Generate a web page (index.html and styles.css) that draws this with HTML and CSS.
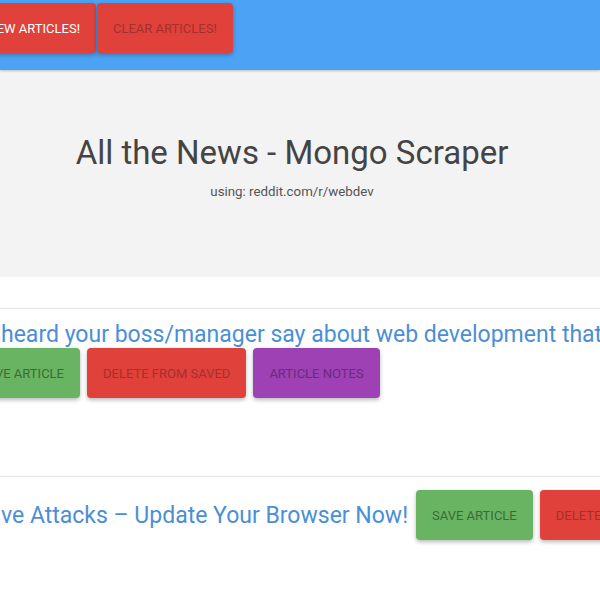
FILE: index.html
```html
<!DOCTYPE html>
<html lang="en">
<head>
<meta charset="utf-8">
<title>All the News - Mongo Scraper</title>
<link rel="stylesheet" href="styles.css">
</head>
<body>
<header class="nav">
  <div class="lead lead-nav"><button class="btn btn-red btn-text-light">Scrape New Articles!</button></div>
  <button class="btn btn-red">Clear Articles!</button>
</header>
<section class="jumbo">
  <h1 class="jumbo-title">All the News - Mongo Scraper</h1>
  <p class="jumbo-sub">using: reddit.com/r/webdev</p>
</section>
<main class="articles">
  <article class="art">
    <h2 class="art-title"><span class="lead lead-text"><span>What's the dumbest thing you've&nbsp;</span></span><span>heard your boss/manager say about web development that made you cringe?</span></h2>
    <div class="actions">
      <div class="lead lead-save"><button class="btn btn-green">Save Article</button></div>
      <button class="btn btn-red">Delete From Saved</button>
      <button class="btn btn-purple">Article Notes</button>
    </div>
  </article>
  <article class="art art-inline">
    <h2 class="art-title"><span class="lead lead-text"><span>Protect Yourself From New Speculati</span></span><span>ve Attacks – Update Your Browser Now!</span></h2>
    <div class="actions">
      <button class="btn btn-green">Save Article</button>
      <button class="btn btn-red">Delete From Saved</button>
      <button class="btn btn-purple">Article Notes</button>
    </div>
  </article>
</main>
</body>
</html>
```
FILE: styles.css
```css
html, body {
  margin: 0;
  padding: 0;
}
body {
  width: 600px;
  height: 600px;
  overflow: hidden;
  background: #ffffff;
  font-family: Roboto, "Liberation Sans", sans-serif;
}

/* clip helper: content overflows to the left */
.lead {
  display: flex;
  justify-content: flex-end;
  flex-shrink: 0;
  white-space: nowrap;
}
.lead > * { flex-shrink: 0; }
.lead-nav { width: 96px; }
.lead-save { width: 80px; }
.lead-text { width: 1px; }

.nav {
  position: relative;
  z-index: 1;
  height: 70px;
  box-sizing: border-box;
  padding-top: 3px;
  background: #4ca2f4;
  box-shadow: 0 1px 2px rgba(0, 0, 0, 0.22);
  display: flex;
  align-items: flex-start;
  gap: 1px;
}

.btn {
  height: 50px;
  padding: 0 16px;
  border: none;
  border-radius: 4px;
  font-family: Roboto, "Liberation Sans", sans-serif;
  font-size: 13px;
  text-transform: uppercase;
  white-space: nowrap;
  flex-shrink: 0;
  box-shadow: 0 2px 4px rgba(0, 0, 0, 0.28);
}
.btn-red { background: #e0413a; color: #a5302b; }
.btn-green { background: #69b463; color: #3a6c37; }
.btn-purple { background: #9d41b4; color: #6a2b7d; }
.btn-text-light { color: #ffffff; }

.jumbo {
  height: 207px;
  box-sizing: border-box;
  padding: 63px 16px 0 0;
  background: #f3f3f3;
  text-align: center;
}
.jumbo-title {
  margin: 0;
  font-size: 33px;
  line-height: 40px;
  font-weight: 400;
  color: #444444;
}
.jumbo-sub {
  margin: 9px 0 0;
  font-size: 13.3px;
  line-height: 20px;
  color: #555555;
}

.articles {
  padding-top: 31px;
}
.art {
  border-top: 1px solid #e6e6e6;
  padding: 12px 0 78px;
}
.art-title {
  margin: 0;
  display: flex;
  white-space: nowrap;
  font-size: 23px;
  line-height: 27px;
  font-weight: 400;
  color: #4a8fd6;
}
.actions {
  display: flex;
  gap: 7px;
}
.art-inline {
  display: flex;
  align-items: center;
  gap: 8px;
  padding-top: 13px;
}
.art-inline .art-title { flex-shrink: 0; }
```
